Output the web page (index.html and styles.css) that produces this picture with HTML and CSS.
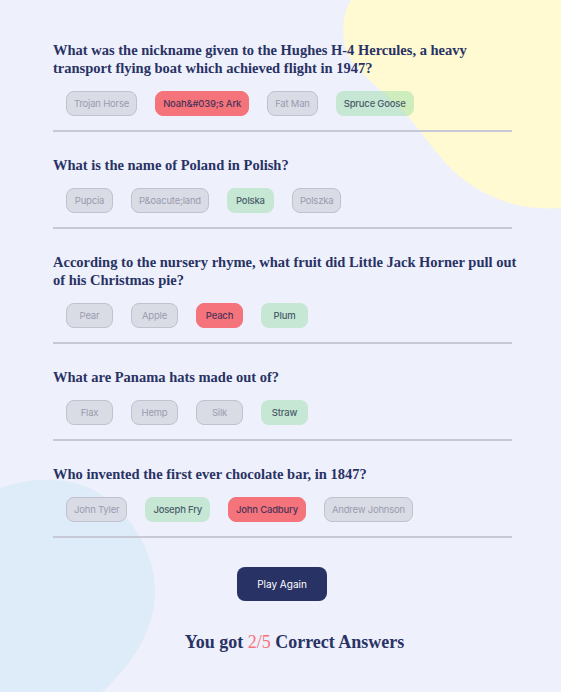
FILE: index.html
```html
<!DOCTYPE html>
<html>
<head>
<meta charset="utf-8">
<link rel="stylesheet" href="styles.css">
</head>
<body>
<svg class="blob blob-yellow" width="230" height="240" viewBox="0 0 230 240">
  <path d="M20 0 L230 0 L230 208 C200 210 180 205 160 196 C120 178 105 150 80 120 C55 90 25 75 15 50 C10 32 12 12 20 0 Z" fill="#FFFAD1"/>
</svg>
<svg class="blob blob-blue" width="160" height="216" viewBox="0 0 160 216">
  <path d="M0 12 C30 2 70 -2 100 18 C140 46 156 86 155 118 C154 152 135 186 102 216 L0 216 Z" fill="#DEEBF8"/>
</svg>
<main class="quiz">
  <section class="question">
    <h2>What was the nickname given to the Hughes H-4 Hercules, a heavy transport flying boat which achieved flight in 1947?</h2>
    <div class="answers">
      <span class="answer">Trojan Horse</span>
      <span class="answer wrong">Noah&amp;#039;s Ark</span>
      <span class="answer">Fat Man</span>
      <span class="answer correct">Spruce Goose</span>
    </div>
  </section>
  <section class="question">
    <h2>What is the name of Poland in Polish?</h2>
    <div class="answers">
      <span class="answer">Pupcia</span>
      <span class="answer">P&amp;oacute;land</span>
      <span class="answer correct">Polska</span>
      <span class="answer">Polszka</span>
    </div>
  </section>
  <section class="question">
    <h2>According to the nursery rhyme, what fruit did Little Jack Horner pull out of his Christmas pie?</h2>
    <div class="answers">
      <span class="answer">Pear</span>
      <span class="answer">Apple</span>
      <span class="answer wrong">Peach</span>
      <span class="answer correct">Plum</span>
    </div>
  </section>
  <section class="question">
    <h2>What are Panama hats made out of?</h2>
    <div class="answers">
      <span class="answer">Flax</span>
      <span class="answer">Hemp</span>
      <span class="answer">Silk</span>
      <span class="answer correct">Straw</span>
    </div>
  </section>
  <section class="question">
    <h2>Who invented the first ever chocolate bar, in 1847?</h2>
    <div class="answers">
      <span class="answer">John Tyler</span>
      <span class="answer correct">Joseph Fry</span>
      <span class="answer wrong">John Cadbury</span>
      <span class="answer">Andrew Johnson</span>
    </div>
  </section>
  <div class="footer">
    <button class="play">Play Again</button>
    <p class="score">You got <span class="num">2/5</span> Correct Answers</p>
  </div>
</main>
</body>
</html>
```

FILE: styles.css
```css
html, body {
  margin: 0;
  padding: 0;
}
body {
  background: #EEF0FB;
  width: 561px;
  height: 692px;
  position: relative;
  overflow: hidden;
}
.blob {
  position: absolute;
  z-index: 0;
}
.blob-yellow {
  top: 0;
  right: 0;
}
.blob-blue {
  left: 0;
  bottom: 0;
}
.quiz {
  position: relative;
  z-index: 1;
  width: 459px;
  margin: 0 0 0 53px;
  padding-top: 41px;
}
.question {
  border-bottom: 2px solid #C7C9D6;
  padding-bottom: 14px;
  margin-bottom: 24px;
}
.question h2 {
  margin: 0 -6px 0 0;
  font-family: "Liberation Serif", serif;
  font-weight: bold;
  font-size: 14.5px;
  line-height: 18px;
  color: #293264;
}
.answers {
  display: flex;
  gap: 18px;
  padding-left: 13px;
  margin-top: 14px;
}
.answer {
  min-width: 47px;
  box-sizing: border-box;
  text-align: center;
  font-family: Inter, sans-serif;
  font-size: 9.5px;
  line-height: 12px;
  padding: 6px 7px;
  border: 1px solid #C0C2D0;
  border-radius: 8px;
  background: #D9DBE5;
  color: #9A9CAF;
  letter-spacing: -0.2px;
  height: 25px;
  display: flex;
  align-items: center;
  justify-content: center;
}
.answer.wrong {
  background: #F5737B;
  border-color: #F5737B;
  color: #4E3459;
  font-weight: 500;
}
.answer.correct {
  background: rgba(148, 220, 162, 0.45);
  border-color: transparent;
  color: #4B5D6C;
  font-weight: 500;
}
.footer {
  display: flex;
  flex-direction: column;
  align-items: center;
  margin-top: 29px;
}
.play {
  width: 90px;
  height: 34px;
  border: none;
  border-radius: 8px;
  background: #293264;
  color: #FFFFFF;
  font-family: Inter, sans-serif;
  font-size: 10px;
  margin-left: -1px;
}
.score {
  margin: 31px 0 0 24px;
  font-family: "Liberation Serif", serif;
  font-weight: bold;
  font-size: 18px;
  line-height: 20px;
  color: #293264;
}
.score .num {
  color: #F5737B;
  font-weight: normal;
}
```
